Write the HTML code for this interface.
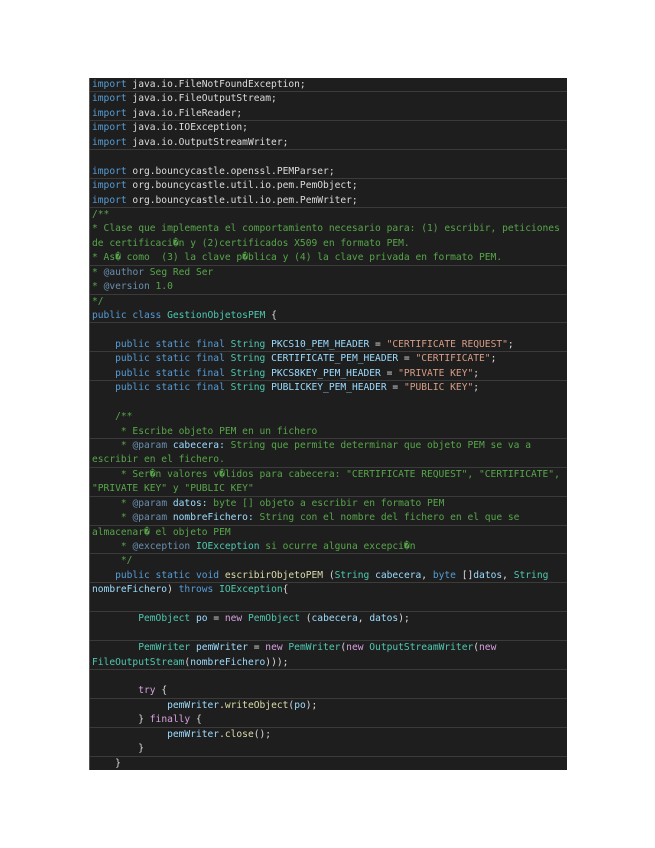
<!DOCTYPE html>
<html><head><meta charset="utf-8"><style>
html,body{margin:0;padding:0;background:#fff;width:655px;height:848px;overflow:hidden}
.code{position:absolute;left:89px;top:78px;width:477px;height:692px;background:#1e1e1e;border-left:1px solid #555}
.l{height:14.45px;line-height:14.45px;font-family:"DejaVu Sans Mono","Liberation Mono",monospace;font-size:9.6px;color:#dcdcdc;white-space:pre;padding-left:2px;box-sizing:border-box;overflow:hidden}
.s{border-bottom:1px solid rgba(255,255,255,0.13)}
.k{color:#569cd6}.c{color:#57a64a}.t{color:#4ec9b0}.st{color:#d69d85}.p{color:#d8a0df}.m{color:#dcdcaa}.v{color:#9cdcfe}.g{color:#6a8fb0}
</style></head><body><div class="code">
<div class="l s"><span class="k">import</span> java.io.FileNotFoundException;</div>
<div class="l"><span class="k">import</span> java.io.FileOutputStream;</div>
<div class="l s"><span class="k">import</span> java.io.FileReader;</div>
<div class="l"><span class="k">import</span> java.io.IOException;</div>
<div class="l s"><span class="k">import</span> java.io.OutputStreamWriter;</div>
<div class="l"> </div>
<div class="l s"><span class="k">import</span> org.bouncycastle.openssl.PEMParser;</div>
<div class="l"><span class="k">import</span> org.bouncycastle.util.io.pem.PemObject;</div>
<div class="l s"><span class="k">import</span> org.bouncycastle.util.io.pem.PemWriter;</div>
<div class="l c">/**</div>
<div class="l c">* Clase que implementa el comportamiento necesario para: (1) escribir, peticiones</div>
<div class="l c">de certificaci�n y (2)certificados X509 en formato PEM.</div>
<div class="l c s">* As� como  (3) la clave p�blica y (4) la clave privada en formato PEM.</div>
<div class="l c">* <span class="g">@author</span> Seg Red Ser</div>
<div class="l c s">* <span class="g">@version</span> 1.0</div>
<div class="l c">*/</div>
<div class="l s"><span class="k">public class</span> <span class="t">GestionObjetosPEM</span> {</div>
<div class="l"> </div>
<div class="l s">    <span class="k">public static final</span> <span class="t">String</span> <span class="v">PKCS10_PEM_HEADER</span> = <span class="st">"CERTIFICATE REQUEST"</span>;</div>
<div class="l">    <span class="k">public static final</span> <span class="t">String</span> <span class="v">CERTIFICATE_PEM_HEADER</span> = <span class="st">"CERTIFICATE"</span>;</div>
<div class="l s">    <span class="k">public static final</span> <span class="t">String</span> <span class="v">PKCS8KEY_PEM_HEADER</span> = <span class="st">"PRIVATE KEY"</span>;</div>
<div class="l">    <span class="k">public static final</span> <span class="t">String</span> <span class="v">PUBLICKEY_PEM_HEADER</span> = <span class="st">"PUBLIC KEY"</span>;</div>
<div class="l"> </div>
<div class="l c">    /**</div>
<div class="l c s">     * Escribe objeto PEM en un fichero</div>
<div class="l c">     * <span class="g">@param</span> <span class="v">cabecera:</span> String que permite determinar que objeto PEM se va a</div>
<div class="l c s">escribir en el fichero.</div>
<div class="l c">     * Ser�n valores v�lidos para cabecera: "CERTIFICATE REQUEST", "CERTIFICATE",</div>
<div class="l c s">"PRIVATE KEY" y "PUBLIC KEY"</div>
<div class="l c">     * <span class="g">@param</span> <span class="v">datos:</span> byte [] objeto a escribir en formato PEM</div>
<div class="l c s">     * <span class="g">@param</span> <span class="v">nombreFichero:</span> String con el nombre del fichero en el que se</div>
<div class="l c">almacenar� el objeto PEM</div>
<div class="l c s">     * <span class="g">@exception</span> <span class="t">IOException</span> si ocurre alguna excepci�n</div>
<div class="l c">     */</div>
<div class="l s">    <span class="k">public static void</span> <span class="m">escribirObjetoPEM</span> (<span class="t">String</span> <span class="v">cabecera</span>, <span class="k">byte</span> []<span class="v">datos</span>, <span class="t">String</span></div>
<div class="l"><span class="v">nombreFichero</span>) <span class="k">throws</span> <span class="t">IOException</span>{</div>
<div class="l s"> </div>
<div class="l">        <span class="t">PemObject</span> <span class="v">po</span> = <span class="p">new</span> <span class="t">PemObject</span> (<span class="v">cabecera</span>, <span class="v">datos</span>);</div>
<div class="l s"> </div>
<div class="l">        <span class="t">PemWriter</span> <span class="v">pemWriter</span> = <span class="p">new</span> <span class="t">PemWriter</span>(<span class="p">new</span> <span class="t">OutputStreamWriter</span>(<span class="p">new</span></div>
<div class="l s"><span class="t">FileOutputStream</span>(<span class="v">nombreFichero</span>)));</div>
<div class="l"> </div>
<div class="l s">        <span class="p">try</span> {</div>
<div class="l">             <span class="v">pemWriter</span>.<span class="m">writeObject</span>(<span class="v">po</span>);</div>
<div class="l s">        } <span class="p">finally</span> {</div>
<div class="l">             <span class="v">pemWriter</span>.<span class="m">close</span>();</div>
<div class="l s">        }</div>
<div class="l">    }</div>
</div></body></html>
